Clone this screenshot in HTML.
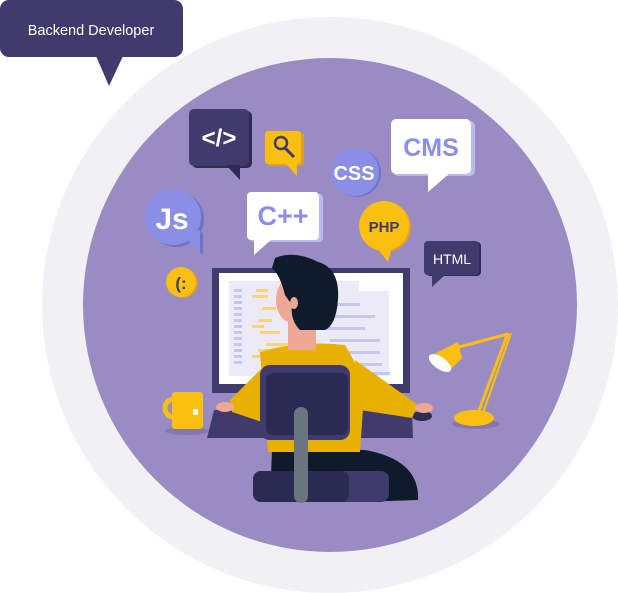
<!DOCTYPE html>
<html><head><style>
html,body{margin:0;padding:0;background:#fff;width:618px;height:593px;overflow:hidden}
svg{display:block}
text{font-family:"Liberation Sans",sans-serif}
</style></head><body>
<svg width="618" height="593" viewBox="0 0 618 593">
<circle cx="330" cy="305" r="288" fill="#f1f0f5"/>
<circle cx="330" cy="305" r="247" fill="#9a8cc2"/>
<!-- tooltip -->
<rect x="0" y="0" width="183" height="57" rx="9" fill="#3f3b6c"/>
<polygon points="96,56 123,56 109,86" fill="#3f3b6c"/>
<text x="91" y="35" fill="#fff" font-size="14.5" text-anchor="middle">Backend Developer</text>
<!-- </> -->
<rect x="192" y="111" width="60" height="57" rx="5" fill="#2e2b55"/>
<rect x="189" y="109" width="60" height="57" rx="5" fill="#3f3b6c"/>
<polygon points="226,165 240,165 240,180" fill="#2e2b55"/>
<text x="219" y="146" fill="#fff" font-size="24" font-weight="bold" text-anchor="middle">&lt;/&gt;</text>
<!-- search -->
<rect x="267" y="133" width="37" height="33" rx="3" fill="#d9a030"/>
<rect x="265" y="131" width="36" height="33" rx="3" fill="#fbbf10"/>
<polygon points="285,163 297,163 297,176" fill="#fbbf10"/>
<circle cx="281" cy="143" r="6" fill="none" stroke="#3f3b6c" stroke-width="2.5"/>
<line x1="285" y1="148" x2="294" y2="157" stroke="#3f3b6c" stroke-width="3"/>
<!-- CSS -->
<circle cx="357" cy="173" r="24" fill="#6f73c8"/>
<circle cx="355" cy="172" r="24" fill="#8a8ee6"/>
<text x="354" y="180" fill="#fff" font-size="20" font-weight="bold" text-anchor="middle">CSS</text>
<!-- CMS -->
<rect x="393" y="121" width="82" height="55" rx="5" fill="#b9bbec"/>
<rect x="391" y="119" width="80" height="55" rx="5" fill="#fff"/>
<polygon points="428,173 450,173 428,192" fill="#fff"/>
<text x="431" y="156" fill="#8a8ee6" font-size="25" font-weight="bold" text-anchor="middle">CMS</text>
<!-- Js -->
<circle cx="176" cy="219" r="28" fill="#6f73c8"/>
<circle cx="173" cy="217" r="28" fill="#8a8ee6"/>
<polygon points="186,238 203,232 203,255" fill="#6f73c8"/>
<polygon points="184,236 200,230 200,253" fill="#8a8ee6"/>
<text x="172" y="229" fill="#fff" font-size="30" font-weight="bold" text-anchor="middle">Js</text>
<!-- C++ -->
<rect x="250" y="194" width="73" height="48" rx="4" fill="#b9bbec"/>
<rect x="247" y="192" width="72" height="48" rx="4" fill="#fff"/>
<polygon points="254,239 272,239 254,255" fill="#fff"/>
<text x="283" y="225" fill="#8a8ee6" font-size="27" font-weight="bold" text-anchor="middle">C++</text>
<!-- PHP -->
<circle cx="386" cy="227" r="25" fill="#d9a030"/>
<circle cx="384" cy="226" r="25" fill="#fbbf10"/>
<polygon points="376,247 392,247 388,262" fill="#fbbf10"/>
<text x="384" y="232" fill="#3f3b6c" font-size="15" font-weight="bold" text-anchor="middle">PHP</text>
<!-- HTML -->
<rect x="426" y="242" width="55" height="34" rx="4" fill="#2e2b55"/>
<rect x="424" y="241" width="55" height="34" rx="4" fill="#3f3b6c"/>
<polygon points="432,274 446,274 432,287" fill="#3f3b6c"/>
<text x="452" y="264" fill="#fff" font-size="14" text-anchor="middle">HTML</text>
<!-- (: -->
<circle cx="183" cy="283" r="15" fill="#d9a030"/>
<circle cx="181" cy="282" r="15" fill="#fbbf10"/>
<text x="181" y="289" fill="#3f3b6c" font-size="17" font-weight="bold" text-anchor="middle">(:</text>
<!-- monitor -->
<rect x="212" y="268" width="198" height="125" fill="#3f3b6c"/>
<rect x="219" y="273" width="184" height="111" fill="#fff"/>
<rect x="229" y="281" width="130" height="95" fill="#eceaf7"/>
<rect x="359" y="291" width="30" height="85" fill="#eceaf7"/>
<g fill="#c5c7f0">
<rect x="234" y="289" width="8" height="3"/><rect x="234" y="295" width="8" height="3"/><rect x="234" y="301" width="8" height="3"/><rect x="234" y="307" width="8" height="3"/><rect x="234" y="313" width="8" height="3"/><rect x="234" y="319" width="8" height="3"/><rect x="234" y="325" width="8" height="3"/><rect x="234" y="331" width="8" height="3"/><rect x="234" y="337" width="8" height="3"/><rect x="234" y="343" width="8" height="3"/><rect x="234" y="349" width="8" height="3"/><rect x="234" y="355" width="8" height="3"/><rect x="234" y="361" width="8" height="3"/>
<rect x="330" y="303" width="30" height="3"/><rect x="335" y="315" width="40" height="3"/><rect x="320" y="327" width="45" height="3"/><rect x="330" y="339" width="50" height="3"/><rect x="340" y="351" width="40" height="3"/><rect x="360" y="363" width="22" height="3"/><rect x="360" y="372" width="30" height="3"/>
</g>
<g fill="#f7d477">
<rect x="256" y="289" width="12" height="3"/><rect x="252" y="295" width="16" height="3"/><rect x="262" y="307" width="14" height="3"/><rect x="258" y="319" width="14" height="3"/><rect x="252" y="325" width="12" height="3"/><rect x="260" y="331" width="20" height="3"/><rect x="266" y="343" width="30" height="3"/><rect x="258" y="349" width="30" height="3"/><rect x="252" y="355" width="24" height="3"/>
</g>
<!-- desk -->
<polygon points="214,410 412,410 413,438 207,438" fill="#3f3b6c"/>
<ellipse cx="422" cy="416" rx="10" ry="5" fill="#2e2b55"/>
<!-- mug -->
<ellipse cx="187" cy="431" rx="22" ry="4" fill="#8577b0"/>
<rect x="172" y="392" width="31" height="37" rx="3" fill="#fbbf10"/>
<path d="M174,399 a9,9 0 1 0 0,18" fill="none" stroke="#fbbf10" stroke-width="5"/>
<rect x="193" y="409" width="5" height="6" fill="#fff"/>
<!-- lamp -->
<ellipse cx="476" cy="424" rx="24" ry="5" fill="#8577b0"/>
<ellipse cx="474" cy="418" rx="20" ry="8" fill="#fbbf10"/>
<line x1="478" y1="413" x2="508" y2="333" stroke="#fbbf10" stroke-width="3"/>
<line x1="483" y1="413" x2="511" y2="333" stroke="#fbbf10" stroke-width="2"/>
<line x1="508" y1="334" x2="455" y2="348" stroke="#fbbf10" stroke-width="3"/>
<path d="M430,356 L458,342 L462,358 L448,372 Z" fill="#fbbf10"/>
<ellipse cx="440" cy="363" rx="13" ry="6" transform="rotate(35 440 363)" fill="#fff"/>
<!-- person legs -->
<path d="M272,450 L365,450 Q420,460 418,500 L360,502 L270,500 Z" fill="#0f1a2a"/>
<!-- arms -->
<path d="M270,360 L230,400 L232,412 L262,422 Z" fill="#e8b000"/>
<path d="M355,360 L418,405 L412,418 L360,410 Z" fill="#e8b000"/>
<ellipse cx="225" cy="407" rx="9" ry="5" fill="#f0a896"/>
<ellipse cx="424" cy="408" rx="9" ry="5" fill="#f0a896"/>
<!-- torso -->
<path d="M260,352 Q300,340 345,345 L365,380 L360,452 L268,452 Z" fill="#e8b000"/>
<!-- neck/head -->
<rect x="288" y="318" width="28" height="32" fill="#f0a896"/>
<ellipse cx="290" cy="300" rx="14" ry="22" fill="#f0a896"/>
<path d="M275,258 Q295,250 318,262 Q340,268 338,300 Q336,325 325,330 L300,330 Q290,320 292,305 L285,295 Q280,275 272,268 Z" fill="#0f1a2a"/>
<ellipse cx="294" cy="303" rx="4" ry="6" fill="#f0a896"/>
<!-- chair -->
<rect x="260" y="365" width="90" height="75" rx="10" fill="#3f3b6c"/>
<rect x="266" y="373" width="82" height="62" rx="7" fill="#2b2a52"/>
<rect x="253" y="471" width="136" height="31" rx="8" fill="#3f3b6c"/>
<rect x="253" y="471" width="96" height="31" rx="8" fill="#2b2a52"/>
<rect x="294" y="407" width="14" height="96" rx="7" fill="#6b7580"/>
</svg>
</body></html>
